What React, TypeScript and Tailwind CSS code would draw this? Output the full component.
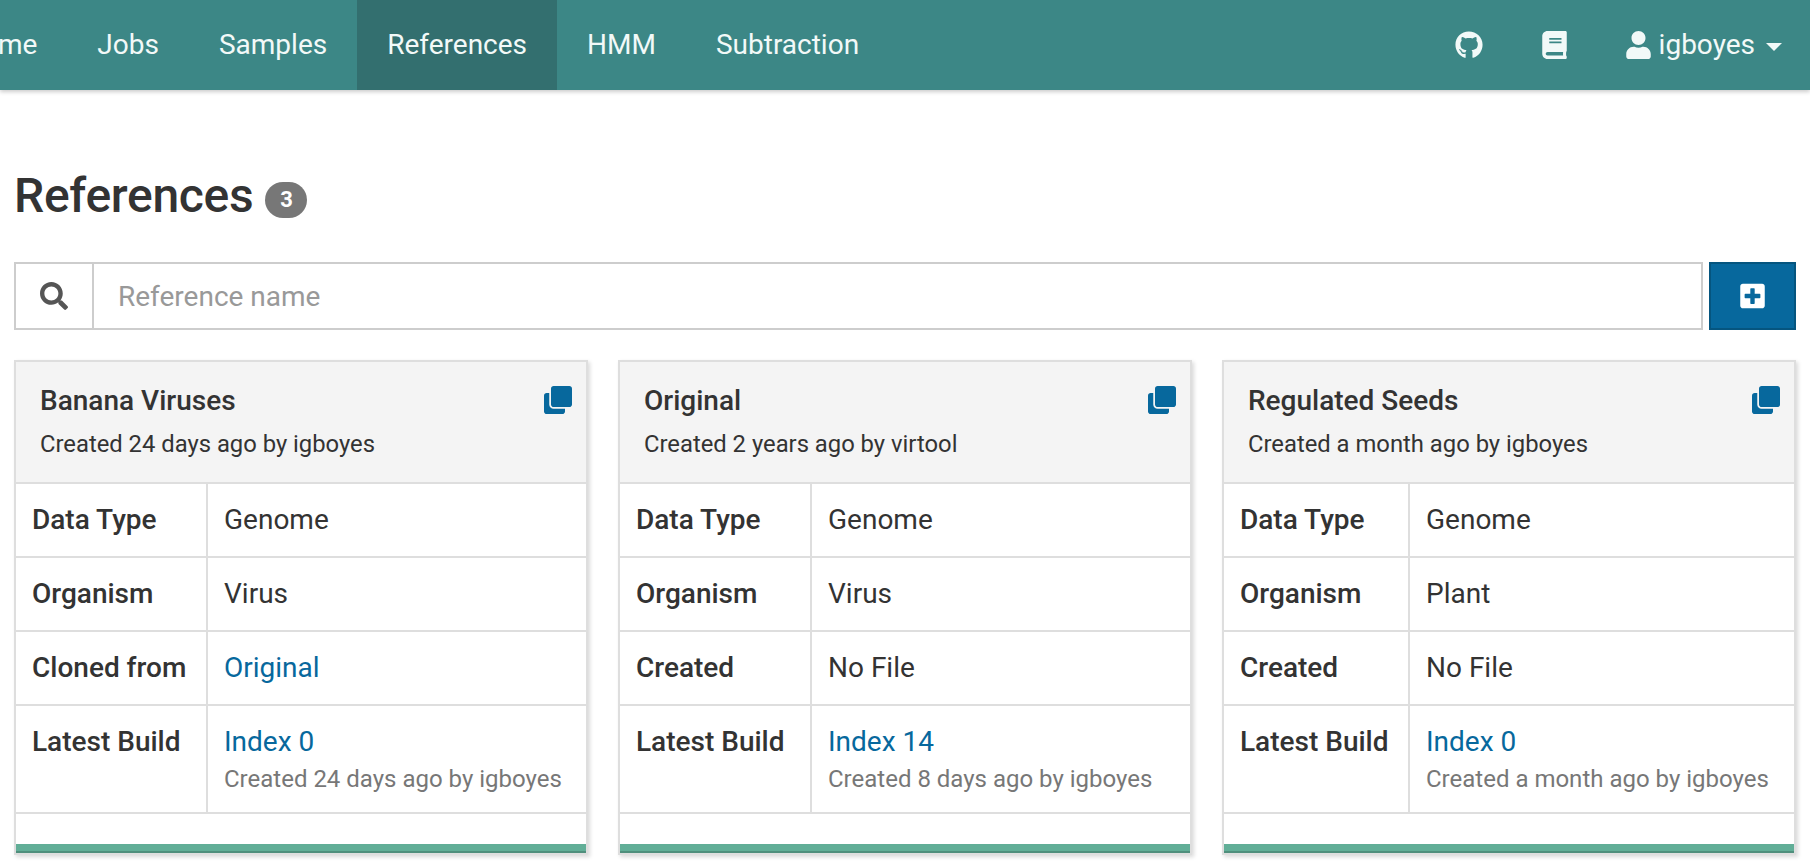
import { FaBook, FaClone, FaGithub, FaPlusSquare, FaSearch, FaUser } from 'react-icons/fa'

interface Row {
  label: string
  value: string
  link?: boolean
  note?: string
}

interface Reference {
  name: string
  created: string
  labelClass: string
  rows: Row[]
}

const references: Reference[] = [
  {
    name: 'Banana Viruses',
    created: 'Created 24 days ago by igboyes',
    labelClass: 'w-[192px]',
    rows: [
      { label: 'Data Type', value: 'Genome' },
      { label: 'Organism', value: 'Virus' },
      { label: 'Cloned from', value: 'Original', link: true },
      { label: 'Latest Build', value: 'Index 0', link: true, note: 'Created 24 days ago by igboyes' },
    ],
  },
  {
    name: 'Original',
    created: 'Created 2 years ago by virtool',
    labelClass: 'w-[192px]',
    rows: [
      { label: 'Data Type', value: 'Genome' },
      { label: 'Organism', value: 'Virus' },
      { label: 'Created', value: 'No File' },
      { label: 'Latest Build', value: 'Index 14', link: true, note: 'Created 8 days ago by igboyes' },
    ],
  },
  {
    name: 'Regulated Seeds',
    created: 'Created a month ago by igboyes',
    labelClass: 'w-[186px]',
    rows: [
      { label: 'Data Type', value: 'Genome' },
      { label: 'Organism', value: 'Plant' },
      { label: 'Created', value: 'No File' },
      { label: 'Latest Build', value: 'Index 0', link: true, note: 'Created a month ago by igboyes' },
    ],
  },
]

function NavBar() {
  return (
    <nav className="h-[90px] bg-[#3c8786] shadow-[0_2px_4px_rgba(0,0,0,0.2)] flex items-center text-[28px] text-[#f2f9f8] overflow-hidden">
      <div className="flex h-full items-center -ml-[68px]">
        <a className="px-[30px] h-full flex items-center">Home</a>
        <a className="px-[30px] h-full flex items-center">Jobs</a>
        <a className="px-[30px] h-full flex items-center">Samples</a>
        <a className="px-[30px] h-full flex items-center bg-[#336f6f]">References</a>
        <a className="px-[30px] h-full flex items-center">HMM</a>
        <a className="px-[30px] h-full flex items-center">Subtraction</a>
      </div>
      <div className="ml-auto flex items-center pr-[28px]">
        <FaGithub className="w-[28px] h-[28px] mr-[59px]" />
        <FaBook className="w-[25px] h-[28px] mr-[59px]" />
        <FaUser className="w-[25px] h-[28px] mr-[8px]" />
        <span>igboyes</span>
        <span className="ml-[11px] mt-[4px] border-x-[8px] border-x-transparent border-t-[8px] border-t-[#f2f9f8]" />
      </div>
    </nav>
  )
}

function ReferenceCard({ reference }: { reference: Reference }) {
  return (
    <div className="border-2 border-[#dedede] shadow-[2px_2px_4px_rgba(0,0,0,0.15)]">
      <div className="h-[122px] bg-[#f4f4f4] border-b-2 border-[#dedede] pl-[24px] pr-[14px] pt-[21px] flex justify-between">
        <div>
          <div className="text-[28px] leading-[36px] font-medium text-[#333]">{reference.name}</div>
          <div className="text-[23.8px] leading-[28px] mt-[11px] text-[#333]">{reference.created}</div>
        </div>
        <FaClone className="w-[28px] h-[28px] mt-[3px] text-[#07689d]" />
      </div>
      {reference.rows.map((row) => (
        <div key={row.label} className="flex border-b-2 border-[#dedede] text-[28px]">
          <div className={`${reference.labelClass} shrink-0 pl-[16px] py-[18px] font-medium text-[#333] border-r-2 border-[#dedede] leading-[36px]`}>
            {row.label}
          </div>
          <div className="pl-[16px] py-[18px] leading-[36px]">
            <div className={row.link ? 'text-[#07689d]' : 'text-[#333]'}>{row.value}</div>
            {row.note && <div className="text-[24px] leading-[28px] mt-[5px] mb-[1px] text-[#777]">{row.note}</div>}
          </div>
        </div>
      ))}
      <div className="h-[30px]" />
      <div className="h-[9px] bg-[#61ae97] border-b-2 border-[#4f8f7c]" />
    </div>
  )
}

export default function App() {
  return (
    <div className="min-h-screen bg-white font-['Roboto',sans-serif] overflow-hidden">
      <NavBar />
      <main className="pl-[14px] pr-[14px]">
        <h1 className="flex items-center mt-[79px] h-[54px] text-[48px] font-medium text-[#333] tracking-[-0.3px]">
          References
          <span className="ml-[12px] mt-[7px] w-[42px] h-[36px] rounded-full bg-[#777] text-white text-[22px] font-bold flex items-center justify-center tracking-normal">
            3
          </span>
        </h1>
        <div className="flex mt-[39px] h-[68px]">
          <div className="flex flex-1 border-2 border-[#cdcdcd]">
            <div className="w-[78px] flex items-center justify-center border-r-2 border-[#cdcdcd]">
              <FaSearch className="w-[28px] h-[28px] text-[#555]" />
            </div>
            <input
              className="flex-1 pl-[24px] pt-[2px] text-[28px] outline-none placeholder:text-[#999]"
              placeholder="Reference name"
            />
          </div>
          <button className="ml-[6px] w-[87px] flex items-center justify-center bg-[#07689d] border-2 border-[#05557f]">
            <FaPlusSquare className="w-[25px] h-[28px] text-white" />
          </button>
        </div>
        <div className="grid grid-cols-3 gap-x-[30px] mt-[30px]">
          {references.map((reference) => (
            <ReferenceCard key={reference.name} reference={reference} />
          ))}
        </div>
      </main>
    </div>
  )
}
